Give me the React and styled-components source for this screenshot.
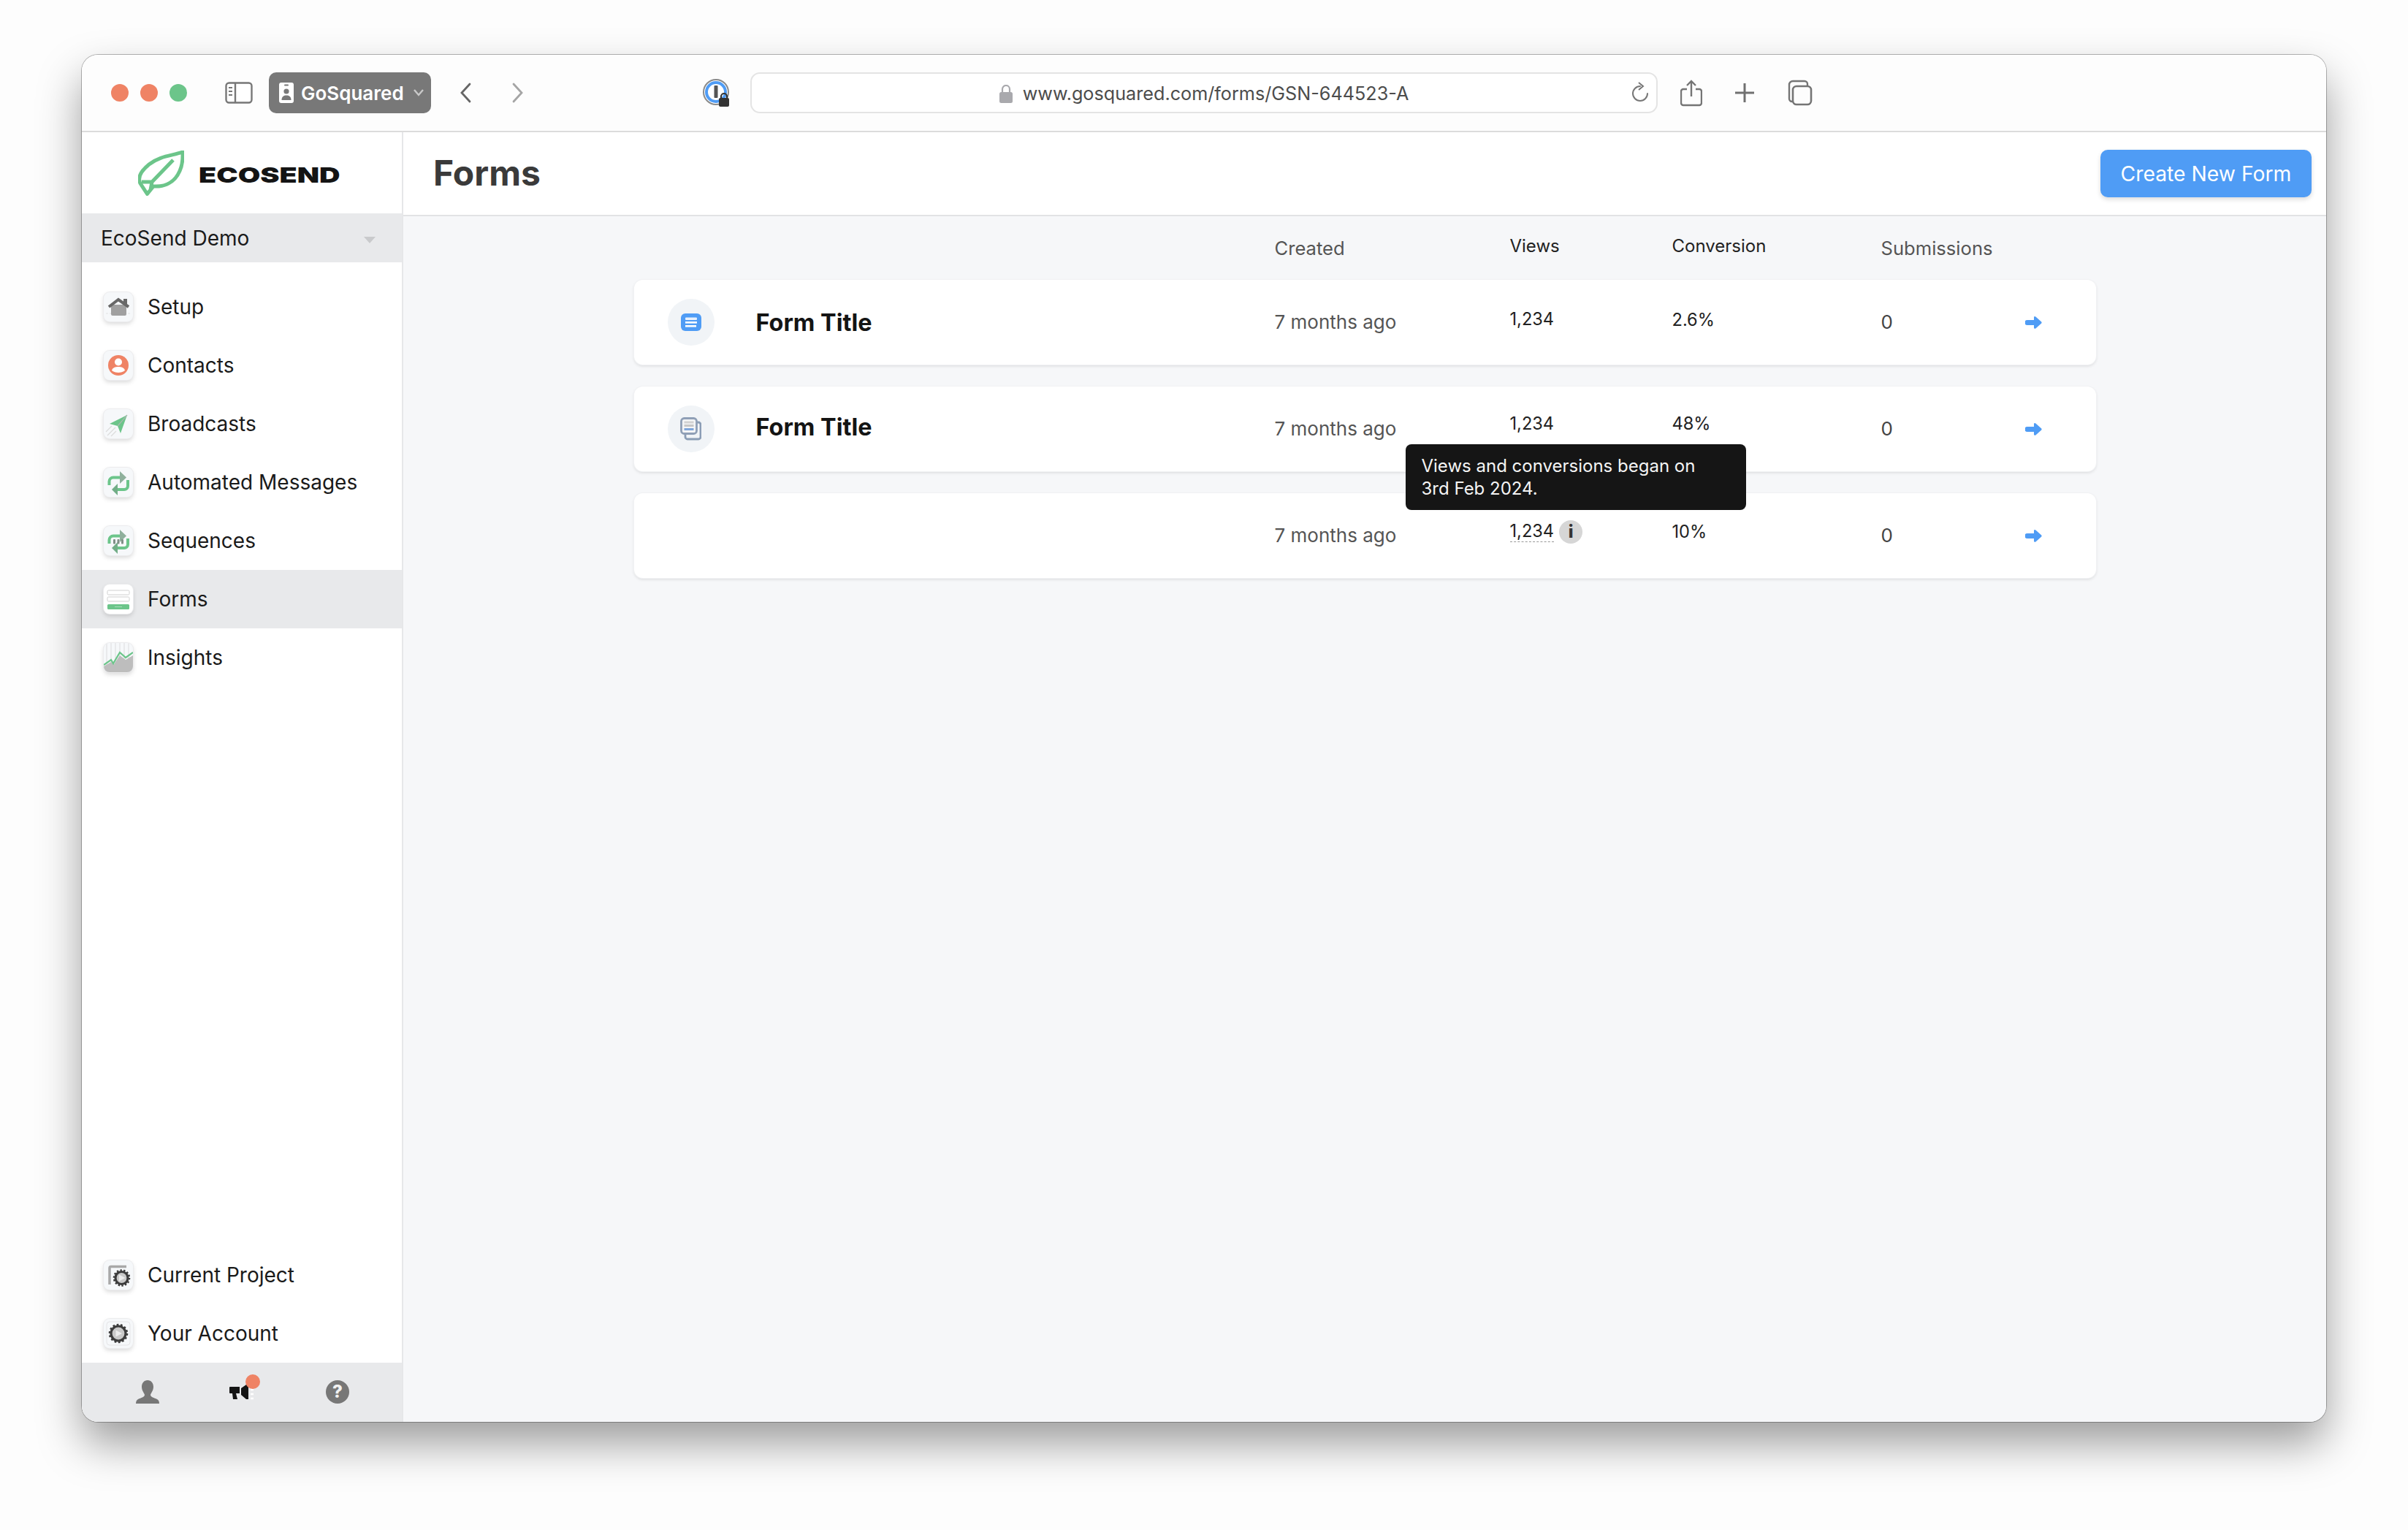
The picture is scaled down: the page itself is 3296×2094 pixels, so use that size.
import styled, { createGlobalStyle, css } from 'styled-components';

const GlobalStyle = createGlobalStyle`
  html, body { margin: 0; padding: 0; background: #fdfdfd; }
  body { font-family: Inter, "Liberation Sans", sans-serif; color: #1a1a1a; }
  * { box-sizing: border-box; }
`;

const Stage = styled.div`
  width: 3296px;
  height: 2094px;
  padding: 75px 112px;
  overflow: hidden;
`;
const Window = styled.div`
  width: 3072px;
  height: 1871px;
  display: flex;
  flex-direction: column;
  background: #fff;
  border-radius: 22px;
  overflow: hidden;
  box-shadow: 0 0 0 1px rgba(0, 0, 0, 0.28), 0 30px 60px rgba(0, 0, 0, 0.38);
`;

/* browser chrome */
const Toolbar = styled.div`
  flex: none;
  height: 106px;
  display: flex;
  align-items: center;
  padding-left: 40px;
  background: #fdfdfd;
  border-bottom: 2px solid #dcdcdc;
`;
const Lights = styled.div`
  display: flex;
  gap: 16px;
`;
const Light = styled.span`
  width: 24px;
  height: 24px;
  border-radius: 50%;
  background: ${(p) => p.$color};
`;
const ToolIcon = styled.svg`
  flex: none;
  display: block;
  margin-left: ${(p) => p.$ml}px;
`;
const ProfilePill = styled.div`
  flex: none;
  width: 222px;
  height: 56px;
  margin-left: 22px;
  padding-left: 14px;
  display: flex;
  align-items: center;
  background: #787878;
  border-radius: 10px;
  color: #fff;
  font-size: 26px;
  font-weight: 600;
`;
const ProfileName = styled.span`
  margin-left: 10px;
`;
const PillChevron = styled.svg`
  margin-left: 12px;
`;
const UrlBar = styled.div`
  flex: none;
  width: 1242px;
  height: 56px;
  margin-left: 27px;
  padding: 0 10px;
  display: grid;
  grid-template-columns: 1fr auto 1fr;
  align-items: center;
  border: 2px solid #e4e4e4;
  border-radius: 13px;
  background: #fff;
`;
const UrlText = styled.div`
  display: flex;
  align-items: center;
  gap: 14px;
  padding-top: 2px;
  color: #4c4c4c;
  font-size: 25.2px;
  grid-column: 2;
`;
const Reload = styled.svg`
  justify-self: end;
  display: block;
`;

/* app */
const AppBody = styled.div`
  flex: 1;
  display: flex;
  min-height: 0;
`;
const Sidebar = styled.aside`
  flex: none;
  width: 440px;
  display: flex;
  flex-direction: column;
  background: #fff;
  border-right: 2px solid #e6e7e9;
`;
const Logo = styled.div`
  flex: none;
  height: 111px;
  padding-left: 77px;
  display: flex;
  align-items: center;
`;
const LogoWord = styled.span`
  display: inline-block;
  margin: 6px 0 0 20px;
  font-size: 29px;
  font-weight: 900;
  line-height: 1;
  color: #141414;
  transform: scaleX(1.36);
  transform-origin: left center;
`;
const ProjectSelect = styled.div`
  flex: none;
  height: 67px;
  padding: 0 36px 0 26px;
  display: flex;
  align-items: center;
  justify-content: space-between;
  background: #e8e9eb;
  font-size: 28px;
  color: #1a1a1a;
`;
const Caret = styled.span`
  width: 0;
  height: 0;
  margin-top: 6px;
  border: 8px solid transparent;
  border-top: 9px solid #c9cacc;
  border-bottom: 0;
`;
const NavList = styled.nav`
  flex: none;
  padding-top: ${(p) => p.$top || 0}px;
  margin-top: ${(p) => (p.$bottom ? 'auto' : '0')};
`;
const NavItem = styled.div`
  height: 80px;
  padding-left: 30px;
  display: flex;
  align-items: center;
  gap: 20px;
  font-size: 28px;
  color: #1a1a1a;
  background: ${(p) => (p.$active ? '#e8e9eb' : 'transparent')};
`;
const Tile = styled.span`
  flex: none;
  width: 40px;
  height: 40px;
  display: block;
  border-radius: 8px;
  background: ${(p) => (p.$active ? '#fff' : '#f6f8fa')};
  box-shadow: 0 0 0 1px #ececee, 0 3px 6px rgba(0, 0, 0, 0.16);
  overflow: hidden;
  svg { display: block; }
`;
const SideFooter = styled.div`
  flex: none;
  height: 81px;
  padding: 0 0 2px 74px;
  display: flex;
  align-items: center;
  background: #e8e9eb;
`;
const FootIcon = styled.span`
  position: relative;
  display: block;
  flex: none;
  width: 32px;
  height: 32px;
  margin-left: ${(p) => p.$ml || 0}px;
  svg { display: block; }
`;
const Badge = styled.span`
  position: absolute;
  top: -8px;
  left: 22px;
  width: 20px;
  height: 20px;
  border-radius: 50%;
  background: #ef8365;
`;
const HelpMark = styled.span`
  width: 32px;
  height: 32px;
  display: flex;
  align-items: center;
  justify-content: center;
  border-radius: 50%;
  background: #777;
  color: #f1f1f1;
  font-size: 24px;
  font-weight: 800;
`;

const Main = styled.main`
  flex: 1;
  min-width: 0;
  display: flex;
  flex-direction: column;
  background: #f6f7f9;
`;
const PageHeader = styled.header`
  flex: none;
  height: 115px;
  padding: 0 20px 0 41px;
  display: flex;
  align-items: center;
  justify-content: space-between;
  background: #fff;
  border-bottom: 2px solid #e2e3e5;
`;
const PageTitle = styled.h1`
  margin: 0;
  padding-bottom: 2px;
  font-size: 48px;
  font-weight: 700;
  color: #3a3a3a;
`;
const CreateButton = styled.button`
  width: 289px;
  height: 65px;
  padding: 0;
  border: 0;
  border-radius: 10px;
  background: #4f9cf5;
  color: #fff;
  font-family: inherit;
  font-size: 28.3px;
  box-shadow: 0 3px 6px rgba(0, 0, 0, 0.14);
`;
const Content = styled.div`
  width: 2001px;
  margin: 0 auto;
`;
const columns = css`
  display: grid;
  grid-template-columns: 121px 710px 322px 222px 286px 196px 1fr;
  align-items: center;
  padding-left: 46px;
`;
const HeadRow = styled.div`
  ${columns}
  height: 87px;
`;
const HeadLabel = styled.span`
  grid-column: ${(p) => p.$col};
  font-size: ${(p) => (p.$strong ? 24 : 25.6)}px;
  color: ${(p) => (p.$strong ? '#222' : '#555')};
  padding-bottom: ${(p) => (p.$strong ? 6 : 0)}px;
`;
const Rows = styled.div`
  display: flex;
  flex-direction: column;
  gap: 30px;
`;
const Card = styled.div`
  ${columns}
  position: relative;
  height: 116px;
  background: #fff;
  border-radius: 12px;
  box-shadow: 0 0 0 1px #f1f2f4, 0 2px 4px rgba(0, 0, 0, 0.12);
`;
const IconDisc = styled.span`
  width: 64px;
  height: 64px;
  display: flex;
  align-items: center;
  justify-content: center;
  border-radius: 50%;
  background: #f1f4f7;
`;
const FormTitle = styled.span`
  grid-column: 2;
  font-size: 32.4px;
  font-weight: 700;
  color: #141414;
  padding-bottom: ${(p) => p.$lift}px;
`;
const DateCell = styled.span`
  grid-column: 3;
  padding-bottom: 2px;
  font-size: 26px;
  color: #555;
`;
const StatCell = styled.span`
  display: flex;
  align-items: center;
  gap: 7px;
  font-size: 23.6px;
  color: #222;
  padding-bottom: ${(p) => p.$lift}px;
`;
const Dotted = styled.span`
  line-height: 28px;
  border-bottom: ${(p) => (p.$on ? '1px dashed #999' : '0')};
`;
const InfoDot = styled.span`
  width: 32px;
  height: 32px;
  display: flex;
  align-items: center;
  justify-content: center;
  border-radius: 50%;
  background: #d6d6d6;
  color: #333;
  font-size: 24px;
  font-weight: 800;
`;
const SubmitCell = styled.span`
  padding-bottom: 2px;
  font-size: 26px;
  color: #444;
`;
const ArrowCell = styled.span`
  margin-left: 1px;
  svg { display: block; }
`;
const Tooltip = styled.div`
  position: absolute;
  top: 79px;
  left: 1056px;
  width: 466px;
  height: 90px;
  padding: 14px 22px;
  border-radius: 8px;
  background: #151515;
  color: #f4f4f4;
  font-size: 24px;
  line-height: 31px;
  z-index: 2;
`;

/* drawings */
const Gear = ({ x, y, r }) => (
  <g>
    <circle cx={x} cy={y} r={r} fill="none" stroke="#3c3c3c" strokeWidth="2.6" strokeDasharray={`${(Math.PI * r) / 14} ${(Math.PI * r) / 14}`} />
    <circle cx={x} cy={y} r={r - 2} fill="#c9c9c9" stroke="#3c3c3c" strokeWidth="3.2" />
    <path d="M-3.500-4.500L5 0l-8.500 4.500z" fill="#ececec" transform={`translate(${x} ${y})`} />
  </g>
);

const LoopArrows = ({ bars }) => (
  <>
    <path d="M7.500 24v-5a5.500 5.500 0 0 1 5.500-5.500h10" fill="none" stroke="#6cc58a" strokeWidth="4" />
    <path d="M22 5l9 8.500-9 8.500z" fill="#8fb09c" />
    <path d="M33 17v8a5 5 0 0 1-5 5H17" fill="none" stroke="#6cc58a" strokeWidth="4" />
    <path d="M19 22l-8 8 8 8z" fill="#72ad87" />
    {bars && (
      <>
        <rect x="13" y="18" width="3" height="6.500" rx="1" fill="#7f8f86" />
        <rect x="18.500" y="18" width="3" height="6.500" rx="1" fill="#7f8f86" />
        <rect x="24" y="18" width="3" height="6.500" rx="1" fill="#7f8f86" />
      </>
    )}
  </>
);

const navIcons = {
  setup: (
    <>
      <path d="M3 29h34" stroke="#e2e2e2" strokeWidth="1" strokeDasharray="3 2" />
      <path d="M10 17h21v13a2 2 0 0 1-2 2H12a2 2 0 0 1-2-2z" fill="#a0a0a0" />
      <path d="M7 20L20 10l14 10" fill="none" stroke="#686868" strokeWidth="4" />
      <rect x="27" y="9" width="5" height="8" fill="#686868" />
    </>
  ),
  contacts: (
    <>
      <circle cx="20" cy="20" r="14" fill="#ef8365" />
      <circle cx="20" cy="15.500" r="5" fill="#fff" />
      <path d="M11 27c1-4 5-5 9-5s8 1 9 5c-2 2-6 3-9 3s-7-1-9-3z" fill="#fff" />
    </>
  ),
  broadcasts: (
    <>
      <path d="M5 36l11-11M10 37l7-7M3 31l8-8" stroke="#dcdcdc" strokeWidth="1.200" />
      <path d="M8 20L32 8l-9 25-4-10z" fill="#6cc58a" />
      <path d="M19 23L32 8" stroke="#a8b9ae" strokeWidth="1.200" />
    </>
  ),
  automated: <LoopArrows />,
  sequences: <LoopArrows bars />,
  forms: (
    <>
      <rect x="5" y="8" width="30" height="6" rx="1.500" fill="#fff" stroke="#cfcfcf" />
      <rect x="5" y="17" width="30" height="6" rx="1.500" fill="#fff" stroke="#cfcfcf" />
      <rect x="5" y="27" width="30" height="7" rx="1.500" fill="#6cc58a" />
      <path d="M15 30.500h10" stroke="#a7dcb9" strokeWidth="1" />
    </>
  ),
  insights: (
    <>
      <path d="M4 0v40M10 0v40M16 0v40M22 0v40M28 0v40M34 0v40" stroke="#e9eaec" strokeWidth="2" />
      <path d="M0 32l10-6 4 3 8-12 8 6 10-6v23H0z" fill="#bdbdbd" />
      <path d="M0 30l10-7 3 5 9-15 8 7 10-7" fill="none" stroke="#6cc58a" strokeWidth="2.200" />
    </>
  ),
  project: (
    <>
      <path d="M31 8.500H10a2 2 0 0 0-2 2V33" fill="none" stroke="#a9a9a9" strokeWidth="3.500" />
      <Gear x={24.500} y={24} r={10.500} />
    </>
  ),
  account: (
    <>
      <rect x="4" y="4" width="32" height="32" rx="4" fill="none" stroke="#e4e4e6" />
      <Gear x={20} y={20} r={12} />
    </>
  ),
};

const navMain = [
  ['Setup', 'setup'],
  ['Contacts', 'contacts'],
  ['Broadcasts', 'broadcasts'],
  ['Automated Messages', 'automated'],
  ['Sequences', 'sequences'],
  ['Forms', 'forms', true],
  ['Insights', 'insights'],
];
const navBottom = [
  ['Current Project', 'project'],
  ['Your Account', 'account'],
];

const FormGlyph = () => (
  <svg width="28" height="25" viewBox="0 0 28 25">
    <rect width="28" height="24" rx="6" fill="#4f9cf5" />
    <rect x="6" y="5.500" width="16" height="3.400" rx="1" fill="#e8f1fd" />
    <rect x="6" y="11" width="16" height="2.600" fill="#fff" />
    <rect x="6" y="16" width="15" height="2.600" fill="#fff" />
  </svg>
);
const StackGlyph = () => (
  <svg width="29" height="32" viewBox="0 0 29 32">
    <path d="M23 7h2a3 3 0 0 1 3 3v17a3 3 0 0 1-3 3H10a3 3 0 0 1-3-3v-4" fill="none" stroke="#8b9db5" strokeWidth="2.800" />
    <rect x="1.500" y="1.500" width="21" height="21" rx="4" fill="#f4f5f6" stroke="#8f9fb6" strokeWidth="2.800" />
    <rect x="5.500" y="5.500" width="13" height="3" fill="#d2d2d2" />
    <rect x="5.500" y="10" width="13" height="3" fill="#c6c6c6" />
    <rect x="5.500" y="15" width="13" height="3" fill="#7fa6db" />
  </svg>
);
const ArrowGlyph = () => (
  <svg width="23" height="17" viewBox="0 0 23 17">
    <path d="M13 0c.5 0 1 .2 1.400.6l7.600 6.600c.8.700.8 1.900 0 2.600l-7.600 6.600c-.9.8-2.400.2-2.400-1V12H3a3.500 3.500 0 0 1 0-7h9V1.600C12 .6 12.400 0 13 0z" fill="#4f9cf5" />
  </svg>
);

const rows = [
  { glyph: <FormGlyph />, title: 'Form Title', titleLift: 0, views: '1,234', conv: '2.6%', lift: 8 },
  { glyph: <StackGlyph />, title: 'Form Title', titleLift: 6, views: '1,234', conv: '48%', lift: 15, tooltip: true },
  { views: '1,234', conv: '10%', lift: 11, info: true },
];

export default function App() {
  return (
    <Stage>
      <GlobalStyle />
      <Window>
        <Toolbar>
          <Lights>
            <Light $color="#ef8365" />
            <Light $color="#ef8365" />
            <Light $color="#6cc58a" />
          </Lights>
          <ToolIcon $ml={52} width="38" height="30" viewBox="0 0 38 30">
            <rect x="1.500" y="1.500" width="35" height="27" rx="4" fill="#fff" stroke="#777" strokeWidth="2.400" />
            <path d="M14 2v26" stroke="#777" strokeWidth="2.400" />
            <path d="M5 8h5M5 13h5M5 18h5" stroke="#777" strokeWidth="2" />
          </ToolIcon>
          <ProfilePill>
            <svg width="20" height="28" viewBox="0 0 20 28">
              <rect width="20" height="28" rx="3" fill="#fff" />
              <rect x="7" y="2.500" width="6" height="2" rx="1" fill="#787878" />
              <circle cx="10" cy="12" r="3.600" fill="#787878" />
              <path d="M3.500 24c0-5 3-6.500 6.500-6.500s6.500 1.500 6.500 6.500z" fill="#787878" />
            </svg>
            <ProfileName>GoSquared</ProfileName>
            <PillChevron width="16" height="12" viewBox="0 0 16 12">
              <path d="M2 2l6 7 6-7" fill="none" stroke="#c9c9c9" strokeWidth="2.400" />
            </PillChevron>
          </ProfilePill>
          <ToolIcon $ml={39} width="16" height="28" viewBox="0 0 16 28">
            <path d="M14 2L3 14l11 12" fill="none" stroke="#666" strokeWidth="2.800" strokeLinecap="round" />
          </ToolIcon>
          <ToolIcon $ml={56} width="16" height="28" viewBox="0 0 16 28">
            <path d="M2 2l11 12L2 26" fill="none" stroke="#a5a5a5" strokeWidth="2.800" strokeLinecap="round" />
          </ToolIcon>
          <ToolIcon $ml={245} width="38" height="38" viewBox="0 0 38 38">
            <circle cx="18" cy="18" r="17" fill="#fff" stroke="#8a8a8a" strokeWidth="2" />
            <circle cx="18" cy="18" r="13" fill="#fff" stroke="#4f9cf5" strokeWidth="4" />
            <rect x="15.500" y="9" width="5" height="17" rx="1" fill="#555" />
            <rect x="22" y="26" width="14" height="12" rx="2" fill="#333" />
            <path d="M25 27v-3a4 4 0 0 1 8 0v3" fill="none" stroke="#333" strokeWidth="2.200" />
          </ToolIcon>
          <UrlBar>
            <UrlText>
              <svg width="18" height="25" viewBox="0 0 18 25">
                <rect y="10" width="18" height="15" rx="2.500" fill="#a9a9ad" />
                <path d="M4 11V6a5 5 0 0 1 10 0v5" fill="none" stroke="#a9a9ad" strokeWidth="2.200" />
              </svg>
              www.gosquared.com/forms/GSN-644523-A
            </UrlText>
            <Reload width="24" height="30" viewBox="0 0 24 30">
              <path d="M12 6a10 10 0 1 0 10 10" fill="none" stroke="#777" strokeWidth="2" strokeLinecap="round" />
              <path d="M10 1l6 5-6 5" fill="none" stroke="#777" strokeWidth="2" />
            </Reload>
          </UrlBar>
          <ToolIcon $ml={31} width="30" height="37" viewBox="0 0 30 37">
            <path d="M9 13H4a3 3 0 0 0-3 3v16a3 3 0 0 0 3 3h22a3 3 0 0 0 3-3V16a3 3 0 0 0-3-3h-5" fill="none" stroke="#757575" strokeWidth="2.400" />
            <path d="M15 23V2M9 8l6-6 6 6" fill="none" stroke="#757575" strokeWidth="2.400" />
          </ToolIcon>
          <ToolIcon $ml={44} width="28" height="28" viewBox="0 0 28 28">
            <path d="M14 1v26M1 14h26" stroke="#707070" strokeWidth="3" />
          </ToolIcon>
          <ToolIcon $ml={45} width="34" height="36" viewBox="0 0 34 36">
            <path d="M7 30H6a4 4 0 0 1-4-4V7a5 5 0 0 1 5-5h16a4 4 0 0 1 4 4v2" fill="none" stroke="#757575" strokeWidth="2.400" />
            <rect x="7" y="9" width="25" height="25" rx="5" fill="none" stroke="#757575" strokeWidth="2.600" />
          </ToolIcon>
        </Toolbar>
        <AppBody>
          <Sidebar>
            <Logo>
              <svg width="63" height="62" viewBox="0 0 63 62">
                <path
                  d="M61 2C48 7 30 7 15 19 4 28-1 37 3 45l9.500 14.500L21 49c15 1 29-5 36-21C62 17 61 8 61 2zM48 13L19 43l-2 11M5 43h14"
                  fill="none"
                  stroke="#6cc58a"
                  strokeWidth="5"
                  strokeLinejoin="round"
                />
              </svg>
              <LogoWord>ECOSEND</LogoWord>
            </Logo>
            <ProjectSelect>
              EcoSend Demo
              <Caret />
            </ProjectSelect>
            <NavList $top={21}>
              {navMain.map(([label, icon, active]) => (
                <NavItem key={label} $active={active}>
                  <Tile $active={active}>
                    <svg width="40" height="40" viewBox="0 0 40 40">{navIcons[icon]}</svg>
                  </Tile>
                  {label}
                </NavItem>
              ))}
            </NavList>
            <NavList $bottom>
              {navBottom.map(([label, icon]) => (
                <NavItem key={label}>
                  <Tile>
                    <svg width="40" height="40" viewBox="0 0 40 40">{navIcons[icon]}</svg>
                  </Tile>
                  {label}
                </NavItem>
              ))}
            </NavList>
            <SideFooter>
              <FootIcon>
                <svg width="32" height="32" viewBox="0 0 32 32">
                  <path d="M16 0c5 0 8 4 8 9 0 5-3 8-4 11 0 3 5 4 9 6 2 1 3 3 3 6H0c0-3 1-5 3-6 4-2 9-3 9-6-1-3-4-6-4-11 0-5 3-9 8-9z" fill="#777" />
                </svg>
              </FootIcon>
              <FootIcon $ml={96}>
                <svg width="34" height="32" viewBox="0 0 34 32">
                  <path d="M1 9h13v9H9l2 8H5l-1-8H1a1 1 0 0 1-1-1v-7a1 1 0 0 1 1-1zM16 11l10-7v22h-3l-7-6z" fill="#141414" />
                  <path d="M29 13h4M29 19h4M29 25h4" stroke="#fff" strokeWidth="2.400" />
                </svg>
                <Badge />
              </FootIcon>
              <FootIcon $ml={100}>
                <HelpMark>?</HelpMark>
              </FootIcon>
            </SideFooter>
          </Sidebar>
          <Main>
            <PageHeader>
              <PageTitle>Forms</PageTitle>
              <CreateButton>Create New Form</CreateButton>
            </PageHeader>
            <Content>
              <HeadRow>
                <HeadLabel $col={3}>Created</HeadLabel>
                <HeadLabel $col={4} $strong>Views</HeadLabel>
                <HeadLabel $col={5} $strong>Conversion</HeadLabel>
                <HeadLabel $col={6}>Submissions</HeadLabel>
              </HeadRow>
              <Rows>
                {rows.map((row, i) => (
                  <Card key={i}>
                    {row.glyph ? <IconDisc>{row.glyph}</IconDisc> : <span />}
                    {row.title ? <FormTitle $lift={row.titleLift}>{row.title}</FormTitle> : <span />}
                    <DateCell>7 months ago</DateCell>
                    <StatCell $lift={row.lift}>
                      <Dotted $on={row.info}>{row.views}</Dotted>
                      {row.info && <InfoDot>i</InfoDot>}
                    </StatCell>
                    <StatCell $lift={row.lift}>{row.conv}</StatCell>
                    <SubmitCell>0</SubmitCell>
                    <ArrowCell>
                      <ArrowGlyph />
                    </ArrowCell>
                    {row.tooltip && (
                      <Tooltip>
                        Views and conversions began on
                        <br />
                        3rd Feb 2024.
                      </Tooltip>
                    )}
                  </Card>
                ))}
              </Rows>
            </Content>
          </Main>
        </AppBody>
      </Window>
    </Stage>
  );
}
